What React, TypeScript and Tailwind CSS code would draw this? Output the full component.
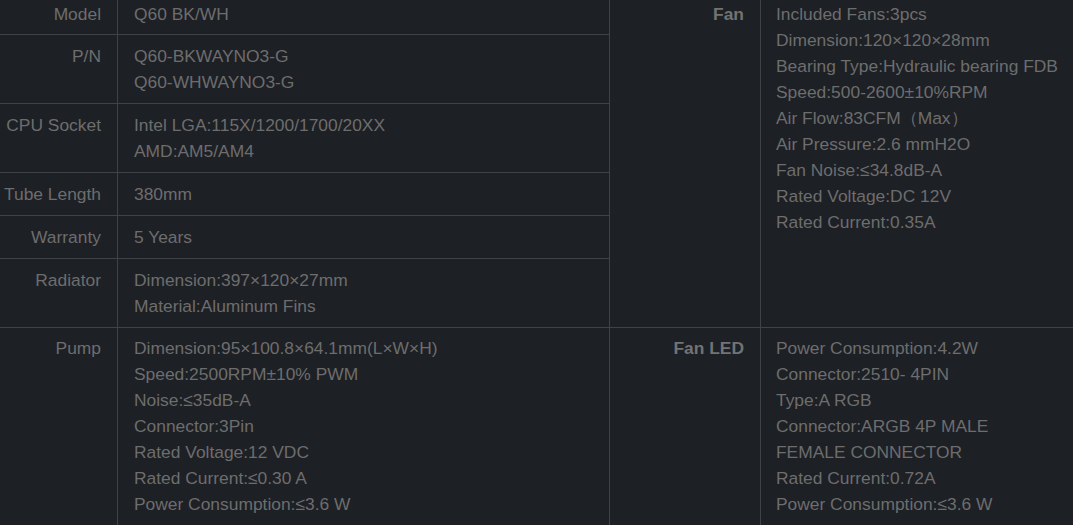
import { type ReactNode } from "react";

type Row = { label: string; lines: string[] };

const leftRows: Row[] = [
  { label: "Model", lines: ["Q60 BK/WH"] },
  { label: "P/N", lines: ["Q60-BKWAYNO3-G", "Q60-WHWAYNO3-G"] },
  { label: "CPU Socket", lines: ["Intel LGA:115X/1200/1700/20XX", "AMD:AM5/AM4"] },
  { label: "Tube Length", lines: ["380mm"] },
  { label: "Warranty", lines: ["5 Years"] },
  { label: "Radiator", lines: ["Dimension:397×120×27mm", "Material:Aluminum Fins"] }
];

const fanLines = [
  "Included Fans:3pcs",
  "Dimension:120×120×28mm",
  "Bearing Type:Hydraulic bearing FDB",
  "Speed:500-2600±10%RPM",
  "Air Flow:83CFM（Max）",
  "Air Pressure:2.6 mmH2O",
  "Fan Noise:≤34.8dB-A",
  "Rated Voltage:DC 12V",
  "Rated Current:0.35A"
];

const pumpLines = [
  "Dimension:95×100.8×64.1mm(L×W×H)",
  "Speed:2500RPM±10% PWM",
  "Noise:≤35dB-A",
  "Connector:3Pin",
  "Rated Voltage:12 VDC",
  "Rated Current:≤0.30 A",
  "Power Consumption:≤3.6 W"
];

const fanLedLines = [
  "Power Consumption:4.2W",
  "Connector:2510- 4PIN",
  "Type:A RGB",
  "Connector:ARGB 4P MALE",
  "FEMALE CONNECTOR",
  "Rated Current:0.72A",
  "Power Consumption:≤3.6 W"
];

const cell = "border border-[#3f4247] align-top";

function Lines({ lines }: { lines: string[] }): ReactNode {
  return (
    <>
      {lines.map((line, i) => (
        <div key={i} className="whitespace-nowrap">
          {line}
        </div>
      ))}
    </>
  );
}

export default function App(): ReactNode {
  return (
    <div className="h-[525px] w-[1073px] overflow-hidden bg-[#1d2025] font-['Liberation_Sans',Arial,sans-serif] text-[17.4px] leading-[26px] text-[#6d6d6d]">
      <table className="-ml-[20px] -mt-[8px] w-[1113px] table-fixed border-collapse">
        <colgroup>
          <col className="w-[137px]" />
          <col className="w-[492px]" />
          <col className="w-[151px]" />
          <col className="w-[333px]" />
        </colgroup>
        <tbody>
          {leftRows.map((row, i) => {
            const pb = i === 0 ? "pb-[7px]" : "pb-2";
            return (
              <tr key={row.label}>
                <th className={`${cell} px-4 pt-2 ${pb} text-right font-normal whitespace-nowrap`}>
                  {row.label}
                </th>
                <td className={`${cell} px-4 pt-2 ${pb} text-left`}>
                  <Lines lines={row.lines} />
                </td>
                {i === 0 && (
                  <>
                    <th
                      rowSpan={leftRows.length}
                      className={`${cell} px-4 pt-2 pb-2 text-right font-bold text-[#737373] whitespace-nowrap`}
                    >
                      Fan
                    </th>
                    <td
                      rowSpan={leftRows.length}
                      className={`${cell} pl-[15px] pr-4 pt-2 pb-2 text-left`}
                    >
                      <Lines lines={fanLines} />
                    </td>
                  </>
                )}
              </tr>
            );
          })}
          <tr>
            <th className={`${cell} px-4 pt-[7px] pb-2 text-right font-normal whitespace-nowrap`}>
              Pump
            </th>
            <td className={`${cell} px-4 pt-[7px] pb-2 text-left`}>
              <Lines lines={pumpLines} />
            </td>
            <th
              className={`${cell} px-4 pt-[7px] pb-2 text-right font-bold text-[#737373] whitespace-nowrap`}
            >
              Fan LED
            </th>
            <td className={`${cell} pl-[15px] pr-4 pt-[7px] pb-2 text-left`}>
              <Lines lines={fanLedLines} />
            </td>
          </tr>
        </tbody>
      </table>
    </div>
  );
}
